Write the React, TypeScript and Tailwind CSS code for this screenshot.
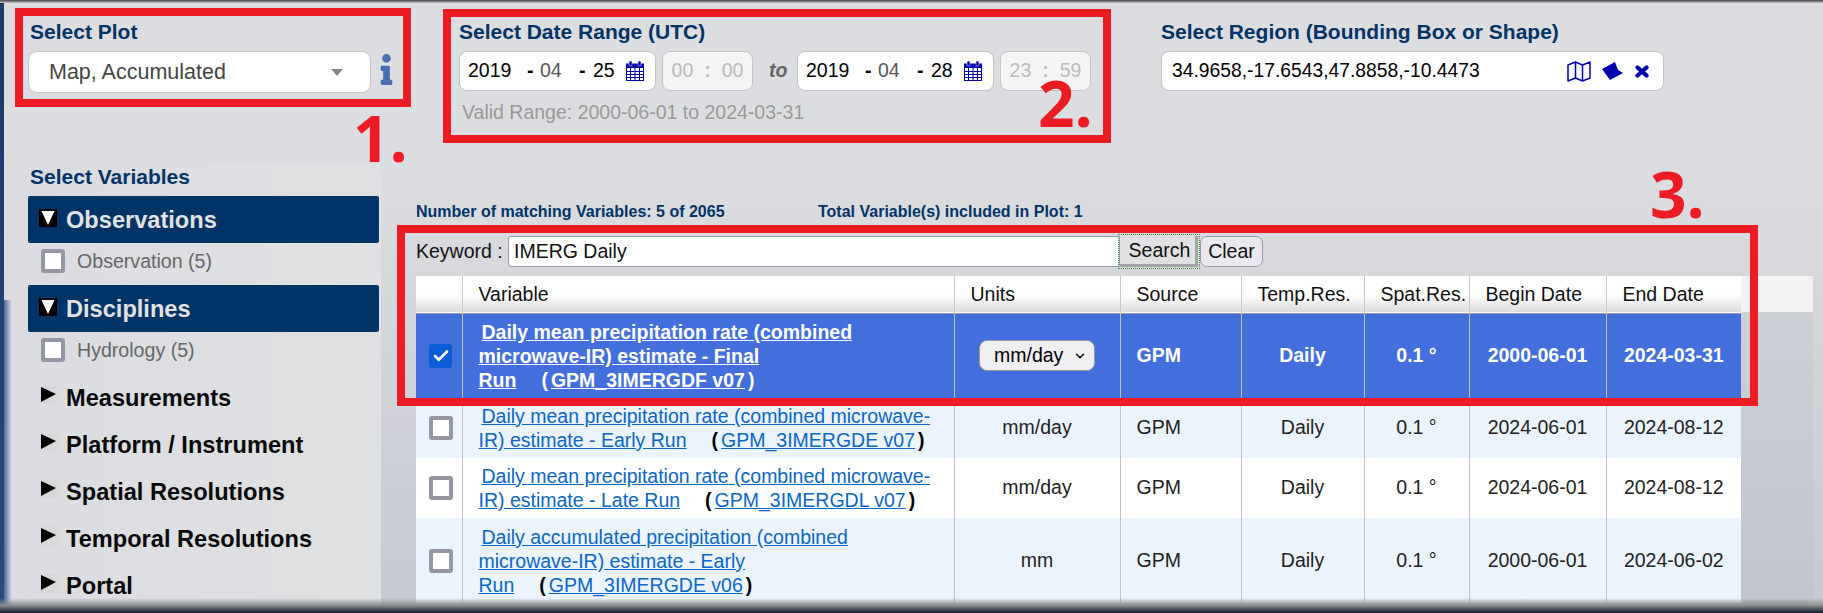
import React from "react";
import { FaInfo } from "react-icons/fa";
import { ChevronDown, Check } from "lucide-react";

function Cal() {
  return (
    <svg width="18" height="20" viewBox="0 0 18 20" className="shrink-0 block">
      <rect x="0.5" y="3" width="17" height="16.5" fill="none" stroke="#0000b0" />
      <rect x="0" y="3" width="18" height="4" fill="#0000b0" />
      <rect x="3" y="0" width="3" height="5" rx="1" fill="#0000b0" stroke="#fff" strokeWidth="0.5" />
      <rect x="12" y="0" width="3" height="5" rx="1" fill="#0000b0" stroke="#fff" strokeWidth="0.5" />
      <path d="M0 10.5H18M0 13.5H18M0 16.5H18M4.5 7V19M9 7V19M13.5 7V19" stroke="#0000b0" strokeWidth="1" />
    </svg>
  );
}

function DateBox({ y, m, d }: { y: string; m: string; d: string }) {
  return (
    <div className="w-[197px] h-[40px] bg-white border border-[#c4c4c4] rounded-[8px] flex items-center pl-[8px] text-[19.5px]">
      <span className="text-black w-[59px]">{y}</span>
      <span className="w-[13px] font-bold text-black">-</span>
      <span className="text-[#555] w-[39px]">{m}</span>
      <span className="w-[14px] font-bold text-black">-</span>
      <span className="text-black w-[33px]">{d}</span>
      <Cal />
    </div>
  );
}

function TimeBox({ a, b }: { a: string; b: string }) {
  return (
    <div className="w-[91px] h-[40px] bg-[#f4f4f5] border border-[#c4c4c4] rounded-[8px] flex items-center justify-center gap-[11px] text-[19.5px] text-[#bbb]">
      <span>{a}</span>
      <span className="font-bold">:</span>
      <span>{b}</span>
    </div>
  );
}

function Heading({ children }: { children: React.ReactNode }) {
  return <div className="h-[24px] leading-[23px] text-[21px] font-bold text-[#003366] whitespace-nowrap">{children}</div>;
}

function DownArrow() {
  return (
    <svg width="18" height="18" viewBox="0 0 18 18" className="shrink-0">
      <rect width="18" height="18" fill="#000" />
      <path d="M2.5 2H15.5L9 16Z" fill="#fff" />
    </svg>
  );
}

function RightArrow() {
  return (
    <svg width="17" height="18" viewBox="0 0 17 18" className="shrink-0">
      <rect width="17" height="18" fill="#d8d8d8" />
      <path d="M1 1L16 8L1 16Z" fill="#000" />
    </svg>
  );
}

function Bar({ label }: { label: string }) {
  return (
    <div className="h-[47px] bg-[#003366] rounded-[2px] flex pl-[11px] pt-[13px] gap-[10px]">
      <DownArrow />
      <span className="text-[23.6px] leading-[22px] -ml-[1px] font-bold text-[#e2e2e2]">{label}</span>
    </div>
  );
}

function Box() {
  return <div className="w-[24px] h-[24px] bg-white border-[4px] border-[#9496a4] rounded-[3px] shrink-0" />;
}

function Sub({ label }: { label: string }) {
  return (
    <div className="h-[42px] flex items-start pl-[13px] pt-[6px] gap-[12px]">
      <Box />
      <span className="text-[19.6px] leading-[24px] text-[#666]">{label}</span>
    </div>
  );
}

const rows = [
  { lines: ["Daily mean precipitation rate (combined", "microwave-IR) estimate - Final", "Run"], id: "GPM_3IMERGDF v07", u: "mm/day", b: "2000-06-01", e: "2024-03-31", sel: true, h: "h-[85px]", bg: "bg-[#426fdc]" },
  { lines: ["Daily mean precipitation rate (combined microwave-", "IR) estimate - Early Run"], id: "GPM_3IMERGDE v07", u: "mm/day", b: "2024-06-01", e: "2024-08-12", sel: false, h: "h-[60px]", bg: "bg-[#ebf3fd]" },
  { lines: ["Daily mean precipitation rate (combined microwave-", "IR) estimate - Late Run"], id: "GPM_3IMERGDL v07", u: "mm/day", b: "2024-06-01", e: "2024-08-12", sel: false, h: "h-[60px]", bg: "bg-white" },
  { lines: ["Daily accumulated precipitation (combined", "microwave-IR) estimate - Early", "Run"], id: "GPM_3IMERGDE v06", u: "mm", b: "2000-06-01", e: "2024-06-02", sel: false, h: "h-[85px]", bg: "bg-[#ebf3fd]" },
];

const heads = [
  { t: "", w: "w-[46px]" },
  { t: "Variable", w: "w-[492px]" },
  { t: "Units", w: "w-[166px]" },
  { t: "Source", w: "w-[121px]" },
  { t: "Temp.Res.", w: "w-[123px]" },
  { t: "Spat.Res.", w: "w-[105px]" },
  { t: "Begin Date", w: "w-[137px]" },
  { t: "End Date", w: "w-[135px]" },
];

function Table() {
  return (
    <table className="table-fixed border-collapse w-[1325px] text-[19.5px]">
      <thead>
        <tr className="h-[37px] bg-gradient-to-b from-white via-white to-[#dcdcdc] border-b-[1px] border-[#999]">
          {heads.map((h, i) => (
            <th key={i} className={`${h.w} font-normal text-left pl-[16px] pr-0 text-[#111] border-r border-[#c8c8c8] last:border-r-0 whitespace-nowrap`}>
              {h.t}
            </th>
          ))}
        </tr>
      </thead>
      <tbody>
        {rows.map((r, i) => {
          const txt = r.sel ? "text-white font-bold" : "text-[#222]";
          const cell = "border-r border-[#c0c0c0] last:border-r-0 text-center";
          const link = r.sel ? "text-white underline font-bold" : "text-[#0a66c8] underline";
          const paren = `font-bold ${r.sel ? "text-white" : "text-black"}`;
          return (
            <tr key={i} className={`${r.h} ${r.bg}`}>
              <td className={`${cell} pl-[13px]`}>
                {r.sel ? (
                  <div className="w-[23px] h-[24px] bg-[#0b5ed7] rounded-[3px] flex items-center justify-center">
                    <Check size={18} strokeWidth={3.5} className="text-white" />
                  </div>
                ) : (
                  <Box />
                )}
              </td>
              <td className="border-r border-[#c0c0c0] pl-[16px] pr-[4px] text-left leading-[24px] whitespace-nowrap">
                {r.lines.map((l, j) => (
                  <React.Fragment key={j}>
                    {j > 0 && <br />}
                    <a className={`${link} ${j === 0 ? "ml-[3px]" : ""}`}>{l}</a>
                  </React.Fragment>
                ))}
                <span className={`${paren} ml-[25px] mr-[3px]`}>(</span>
                <a className={link}>{r.id}</a>
                <span className={`${paren} ml-[3px]`}>)</span>
              </td>
              <td className={`${cell} ${txt}`}>
                {r.sel ? (
                  <div className="mx-auto w-[116px] h-[31px] font-normal text-black bg-[#efeff2] border border-[#999] rounded-[8px] flex items-center pl-[14px] gap-[10px]">
                    <span>mm/day</span>
                    <ChevronDown size={14} strokeWidth={2.5} />
                  </div>
                ) : (
                  r.u
                )}
              </td>
              <td className={`border-r border-[#c0c0c0] text-left pl-[16px] ${txt}`}>GPM</td>
              <td className={`${cell} ${txt}`}>Daily</td>
              <td className={`${cell} ${txt}`}>0.1 °</td>
              <td className={`${cell} ${txt}`}>{r.b}</td>
              <td className={`${cell} ${txt}`}>{r.e}</td>
            </tr>
          );
        })}
      </tbody>
    </table>
  );
}

export default function App() {
  return (
    <div className="relative w-[1823px] h-[613px] overflow-hidden [font-family:'Liberation_Sans',Arial,sans-serif] bg-[#dcdde0]">
      <div className="flex h-[165px] pt-[20px]">
        {/* plot */}
        <div className="ml-[30px] w-[370px]">
          <Heading>Select Plot</Heading>
          <div className="flex items-start mt-[7px] ml-[-2px]">
            <div className="w-[343px] h-[42px] bg-white border border-[#c8c8c8] rounded-[9px] flex items-center pl-[20px] pr-[27px] justify-between text-[21.5px] text-[#444]">
              <span>Map, Accumulated</span>
              <span className="w-0 h-0 border-l-[6px] border-r-[6px] border-t-[7px] border-l-transparent border-r-transparent border-t-[#888]" />
            </div>
            <FaInfo className="text-[#4a6fb0] w-[15px] h-[31px] ml-[8px] mt-[3px]" />
          </div>
        </div>
        {/* date */}
        <div className="ml-[59px] w-[702px]">
          <Heading>Select Date Range (UTC)</Heading>
          <div className="flex items-center mt-[7px]">
            <DateBox y="2019" m="04" d="25" />
            <div className="ml-[6px]"><TimeBox a="00" b="00" /></div>
            <span className="mx-[16px] w-[12px] italic font-bold text-[19.5px] text-[#666]">to</span>
            <DateBox y="2019" m="04" d="28" />
            <div className="ml-[6px]"><TimeBox a="23" b="59" /></div>
          </div>
          <div className="mt-[9px] ml-[3px] text-[19.5px] leading-[24px] text-[#999]">Valid Range: 2000-06-01 to 2024-03-31</div>
        </div>
        {/* region */}
        <div className="w-[503px]">
          <Heading>Select Region (Bounding Box or Shape)</Heading>
          <div className="mt-[7px] w-[503px] h-[40px] bg-white border border-[#c4c4c4] rounded-[8px] flex items-center pl-[10px] pr-[14px] text-[19.3px] text-black">
            <span className="flex-1 pt-[1px]">34.9658,-17.6543,47.8858,-10.4473</span>
            <svg width="24" height="21" viewBox="0 0 24 21" fill="none" stroke="#0000b0" strokeWidth="1.5" strokeLinejoin="round">
              <path d="M1 4L8.5 1L15.5 4L23 1V17L15.5 20L8.5 17L1 20Z" />
              <path d="M8.5 1V17M15.5 4V20" />
            </svg>
            <svg width="21" height="18" viewBox="0 0 21 18" className="ml-[11px]">
              <path d="M0 7L13 0L16 8L21 11L8 18Z" fill="#0000b0" />
            </svg>
            <svg width="14" height="13" viewBox="0 0 14 13" className="ml-[12px]" stroke="#0000b0" strokeWidth="4.2" strokeLinecap="round">
              <path d="M2.5 2.5L11.5 10.5M11.5 2.5L2.5 10.5" />
            </svg>
          </div>
        </div>
      </div>

      <div className="flex">
        {/* sidebar */}
        <div className="w-[381px] h-[448px] pl-[28px] pr-[2px] bg-gradient-to-r from-[#dadce1] to-[#e0e1e2]">
          <div className="ml-[2px]"><Heading>Select Variables</Heading></div>
          <div className="mt-[7px]">
            <Bar label="Observations" />
            <Sub label="Observation (5)" />
            <Bar label="Disciplines" />
            <Sub label="Hydrology (5)" />
            {["Measurements", "Platform / Instrument", "Spatial Resolutions", "Temporal Resolutions", "Portal"].map((t) => (
              <div key={t} className="h-[47px] flex pl-[12px] pt-[12px] gap-[9px]">
                <RightArrow />
                <span className="text-[23.6px] leading-[24px] font-bold text-[#0a0a0a] whitespace-nowrap">{t}</span>
              </div>
            ))}
          </div>
        </div>
        {/* main */}
        <div className="pl-[35px] flex-1 h-[448px] bg-gradient-to-b from-[#dcdde0] to-[#c4c8d0]">
          <div className="mt-[35px] h-[24px] flex text-[16px] leading-[24px] font-bold text-[#003366] whitespace-nowrap">
            <span className="w-[402px]">Number of matching Variables: 5 of 2065</span>
            <span>Total Variable(s) included in Plot: 1</span>
          </div>
          <div className="mt-[12px] h-[31px] flex items-center text-[19.5px] text-[#111]">
            <span className="w-[92px]">Keyword :</span>
            <div className="w-[612px] h-[31px] bg-white border border-[#9a9aaa] rounded-l-[3px] pl-[5px] leading-[29px]">IMERG Daily</div>
            <button className="w-[78px] h-[31px] pl-[4px] bg-[#e0e0e2] border-r-[3px] border-b-[3px] border-[#a4a4a4] outline-1 outline-dotted outline-offset-[1px] outline-[#3a9a3a]">Search</button>
            <button className="ml-[2px] w-[63px] h-[31px] bg-[#e9e8ef] border border-[#9a9aaa] rounded-[7px]">Clear</button>
          </div>
          <div className="mt-[9px] flex items-start">
            <Table />
            <div className="w-[72px]">
              <div className="h-[37px] bg-[#f2f2f3] border-b border-[#d0d0d0]" />
              <div className="h-[300px] bg-gradient-to-b from-[#ccd0d6] to-[#bfc3cd]" />
            </div>
          </div>
        </div>
      </div>

      {/* window edges */}
      <div className="absolute left-0 top-0 w-[4px] h-full bg-gradient-to-b from-[#1b3a6b] to-[#2a4a80]" />
      <div className="absolute left-[4px] top-[300px] w-[8px] h-[313px] bg-gradient-to-r from-[#4a6a9a] to-transparent" />
      <div className="absolute left-0 top-0 w-full h-[3px] bg-gradient-to-b from-[#444] to-[#ccc]" />
      <div className="absolute left-0 bottom-0 w-full h-[15px] bg-gradient-to-b from-transparent via-[#8a8c90] to-[#101c2c]" />

      {/* annotations */}
      <div className="absolute left-[15px] top-[8px] w-[396px] h-[99px] border-[8px] border-[#ed1c24]" />
      <div className="absolute left-[443px] top-[9px] w-[668px] h-[134px] border-[8px] border-[#ed1c24]" />
      <div className="absolute left-[397px] top-[225px] w-[1361px] h-[181px] border-[8px] border-[#ed1c24]" />
      <span className="absolute left-[353px] top-[94px] text-[64px] leading-[88px] font-bold text-[#ed1c24] [font-family:'Open_Sans',sans-serif]">1.</span>
      <span className="absolute left-[1038px] top-[59px] text-[64px] leading-[88px] font-bold text-[#ed1c24] [font-family:'Open_Sans',sans-serif]">2.</span>
      <span className="absolute left-[1650px] top-[150px] text-[64px] leading-[88px] font-bold text-[#ed1c24] [font-family:'Open_Sans',sans-serif]">3.</span>
    </div>
  );
}
